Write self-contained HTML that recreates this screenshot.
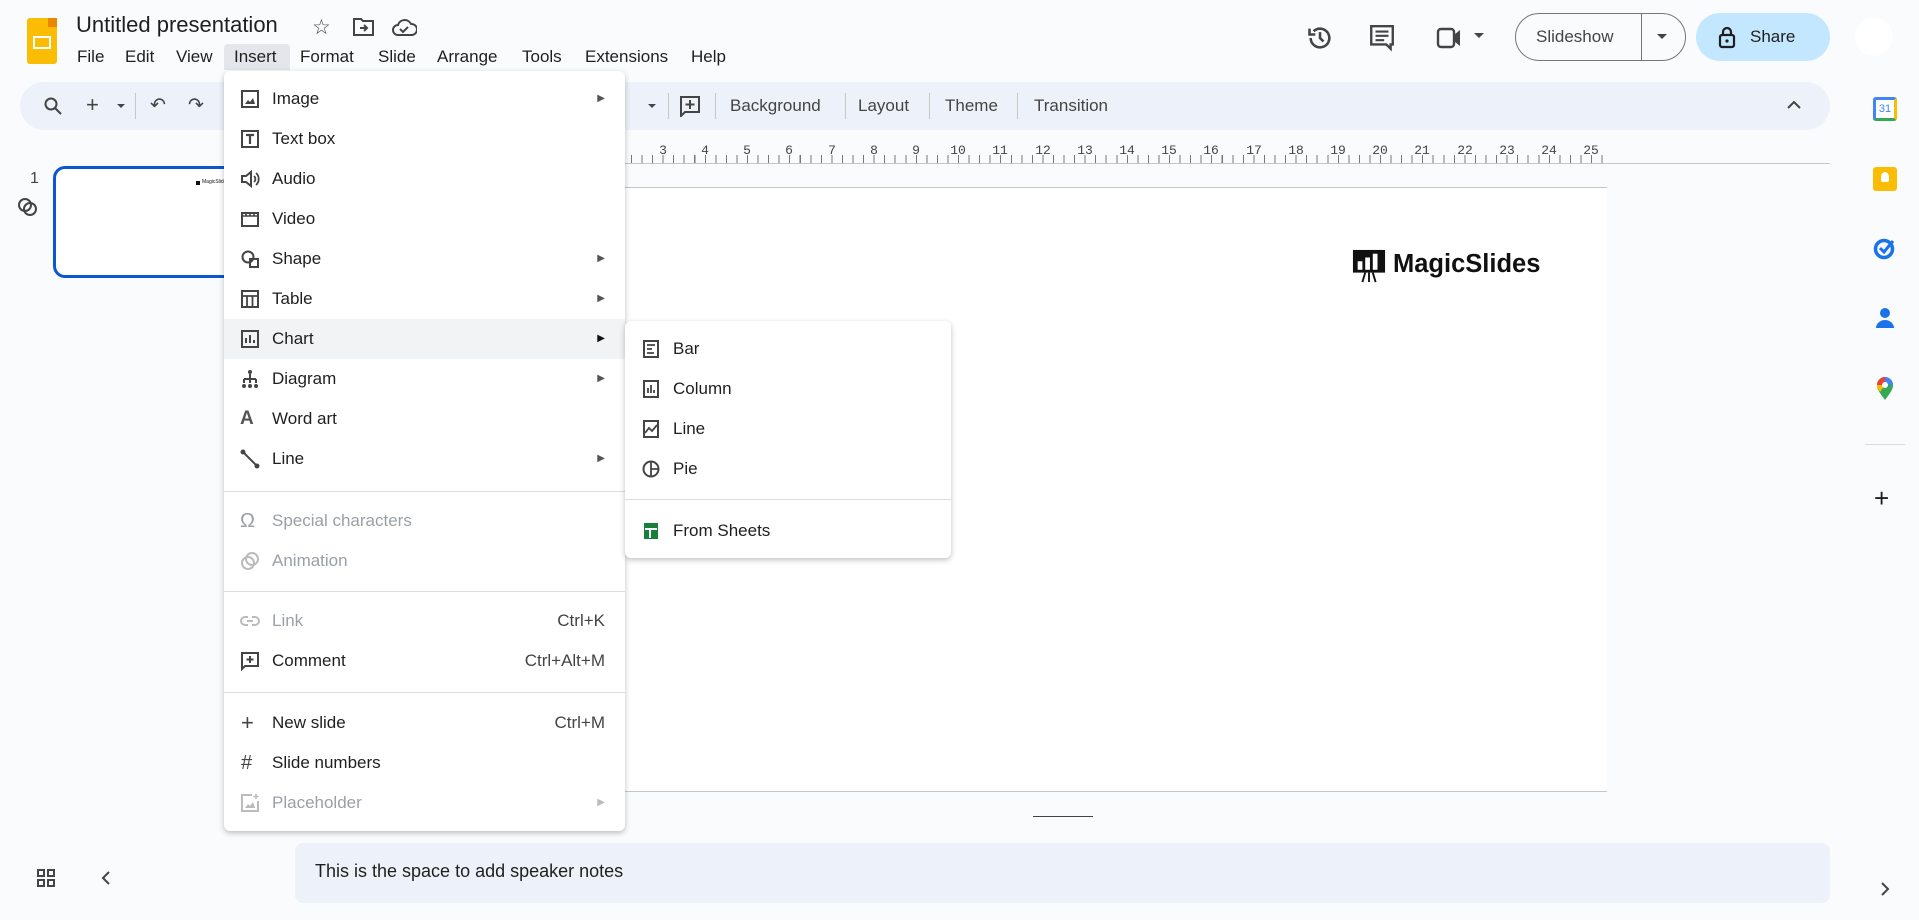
<!DOCTYPE html>
<html><head><meta charset="utf-8"><style>
*{box-sizing:border-box;margin:0;padding:0}
body{width:1919px;height:920px;background:#f9fbfd;font-family:"Liberation Sans",Arial,sans-serif;color:#1f1f1f;position:relative;overflow:hidden}
.a{position:absolute}
.menu span{position:absolute}
.mi{position:absolute;left:0;width:401px;height:40px;font-size:17px;line-height:40px}
.mi .t{left:48px}
.mi .ic{left:16px;top:10px;width:20px;height:20px}
.mi .ar{right:20px;font-size:10px;color:#555}
.mi .sc{right:20px;color:#444}
.dis{color:#9aa0a6}
.sep{position:absolute;left:0;height:1px;background:#dadce0}
.tb{font-size:17px;color:#444;top:96px}
.vs{position:absolute;width:1px;height:26px;background:#c7c7c7;top:93px}
.rn{position:absolute;top:143px;font-size:13px;color:#444;font-family:"Liberation Mono",monospace;transform:translateX(-50%)}
svg{display:block}
</style></head><body>
<div class="a" style="left:27px;top:18px;width:30px;height:46px;background:#fbbc04;border-radius:3px"></div>
<div class="a" style="left:48px;top:18px;width:9px;height:9px;background:#ea8600"></div>
<div class="a" style="left:33px;top:36px;width:18px;height:13px;border:2.5px solid #fff"></div>
<div class="a" style="left:76px;top:12px;font-size:22px;color:#1f1f1f">Untitled presentation</div>
<div class="a" style="left:312px;top:15px;font-size:21px;color:#444">☆</div>
<svg class="a" style="left:352px;top:16px" width="24" height="22" viewBox="0 0 24 22"><path d="M2 3h7l2 2h10v14H2z" fill="none" stroke="#444" stroke-width="2"/><path d="M8 12h7m-3-3l3 3-3 3" fill="none" stroke="#444" stroke-width="2"/></svg>
<svg class="a" style="left:391px;top:16px" width="26" height="22" viewBox="0 0 26 22"><path d="M7 19a5 5 0 010-10 7 7 0 0113-1 5 5 0 011 11z" fill="none" stroke="#444" stroke-width="2"/><path d="M9 13l3 3 5-5" fill="none" stroke="#444" stroke-width="2"/></svg>
<div class="a" style="left:224px;top:44px;width:66px;height:26px;background:#e3e6ea;border-radius:4px 4px 0 0"></div>
<div class="a" style="top:47px;font-size:17px;left:77px">File</div>
<div class="a" style="top:47px;font-size:17px;left:125px">Edit</div>
<div class="a" style="top:47px;font-size:17px;left:176px">View</div>
<div class="a" style="top:47px;font-size:17px;left:234px">Insert</div>
<div class="a" style="top:47px;font-size:17px;left:300px">Format</div>
<div class="a" style="top:47px;font-size:17px;left:378px">Slide</div>
<div class="a" style="top:47px;font-size:17px;left:437px">Arrange</div>
<div class="a" style="top:47px;font-size:17px;left:522px">Tools</div>
<div class="a" style="top:47px;font-size:17px;left:585px">Extensions</div>
<div class="a" style="top:47px;font-size:17px;left:691px">Help</div>
<svg class="a" style="left:1306px;top:24px" width="28" height="28" viewBox="0 0 24 24"><path d="M4 12a8 8 0 1 0 2.5-5.8" fill="none" stroke="#444" stroke-width="2.2"/><path d="M3 4v5h5" fill="none" stroke="#444" stroke-width="2.2"/><path d="M12 7v5l3 3" fill="none" stroke="#444" stroke-width="2.2"/></svg>
<svg class="a" style="left:1369px;top:24px" width="26" height="28" viewBox="0 0 24 26"><path d="M2 2h20v17h-2v4l-4-4H2z" fill="none" stroke="#444" stroke-width="2.2"/><path d="M6 7h12M6 11h12M6 15h8" stroke="#444" stroke-width="2"/></svg>
<svg class="a" style="left:1436px;top:25px" width="28" height="26" viewBox="0 0 28 26"><rect x="2" y="4" width="16" height="18" rx="3" fill="none" stroke="#444" stroke-width="2.4"/><path d="M18 10l6-5v16l-6-5z" fill="#444"/></svg>
<div class="a" style="left:1474px;top:33px;border:5px solid transparent;border-top:5px solid #444"></div>
<div class="a" style="left:1515px;top:13px;width:171px;height:48px;border:1px solid #747775;border-radius:24px"></div>
<div class="a" style="left:1641px;top:13px;width:1px;height:48px;background:#747775"></div>
<div class="a" style="left:1536px;top:27px;font-size:17px;color:#444">Slideshow</div>
<div class="a" style="left:1657px;top:34px;border:5px solid transparent;border-top:5px solid #444"></div>
<div class="a" style="left:1696px;top:13px;width:134px;height:48px;background:#c2e7ff;border-radius:24px"></div>
<svg class="a" style="left:1718px;top:25px" width="18" height="24" viewBox="0 0 18 24"><rect x="2" y="10" width="14" height="12" rx="2" fill="none" stroke="#1f1f1f" stroke-width="2.2"/><path d="M5 10V7a4 4 0 018 0v3" fill="none" stroke="#1f1f1f" stroke-width="2.2"/><circle cx="9" cy="16" r="1.6" fill="#1f1f1f"/></svg>
<div class="a" style="left:1750px;top:27px;font-size:17px;color:#1f1f1f">Share</div>
<div class="a" style="left:1855px;top:18px;width:38px;height:38px;background:#fff;border-radius:50%"></div>
<div class="a" style="left:20px;top:82px;width:1810px;height:48px;background:#edf2fa;border-radius:24px"></div>
<svg class="a" style="left:43px;top:96px" width="20" height="20" viewBox="0 0 20 20"><circle cx="8" cy="8" r="5.5" fill="none" stroke="#444" stroke-width="2"/><path d="M12 12l6 6" stroke="#444" stroke-width="2"/></svg>
<div class="a" style="left:86px;top:92px;font-size:22px;color:#444">+</div>
<div class="a" style="left:117px;top:104px;border:4px solid transparent;border-top:4px solid #444"></div>
<div class="vs" style="left:135px"></div>
<div class="a" style="left:150px;top:94px;font-size:19px;color:#444">↶</div>
<div class="a" style="left:188px;top:94px;font-size:19px;color:#444">↷</div>
<div class="a" style="left:648px;top:104px;border:4px solid transparent;border-top:4px solid #444"></div>
<div class="vs" style="left:668px"></div>
<svg class="a" style="left:679px;top:95px" width="22" height="22" viewBox="0 0 22 22"><path d="M2 2h18v15H6l-4 4z" fill="none" stroke="#444" stroke-width="2"/><path d="M11 5v9M6.5 9.5h9" stroke="#444" stroke-width="2"/></svg>
<div class="vs" style="left:715px"></div>
<div class="a tb" style="left:730px">Background</div>
<div class="vs" style="left:845px"></div>
<div class="a tb" style="left:858px">Layout</div>
<div class="vs" style="left:929px"></div>
<div class="a tb" style="left:945px">Theme</div>
<div class="vs" style="left:1017px"></div>
<div class="a tb" style="left:1034px">Transition</div>
<svg class="a" style="left:1786px;top:100px" width="16" height="10" viewBox="0 0 16 10"><path d="M2 8l6-6 6 6" fill="none" stroke="#444" stroke-width="2"/></svg>
<div class="a" style="left:536px;top:155px;width:1071px;height:8px;background:repeating-linear-gradient(90deg,#777 0 1px,transparent 1px 10.55px)"></div>
<div class="a" style="left:536px;top:163px;width:1294px;height:1px;background:#c4c7c5"></div>
<div class="rn" style="left:663px">3</div><div class="rn" style="left:705px">4</div><div class="rn" style="left:747px">5</div><div class="rn" style="left:789px">6</div><div class="rn" style="left:832px">7</div><div class="rn" style="left:874px">8</div><div class="rn" style="left:916px">9</div><div class="rn" style="left:958px">10</div><div class="rn" style="left:1000px">11</div><div class="rn" style="left:1043px">12</div><div class="rn" style="left:1085px">13</div><div class="rn" style="left:1127px">14</div><div class="rn" style="left:1169px">15</div><div class="rn" style="left:1211px">16</div><div class="rn" style="left:1254px">17</div><div class="rn" style="left:1296px">18</div><div class="rn" style="left:1338px">19</div><div class="rn" style="left:1380px">20</div><div class="rn" style="left:1422px">21</div><div class="rn" style="left:1465px">22</div><div class="rn" style="left:1507px">23</div><div class="rn" style="left:1549px">24</div><div class="rn" style="left:1591px">25</div>
<div class="a" style="left:532px;top:187px;width:1075px;height:605px;background:#fff;border-top:1px solid #c4c7c5;border-bottom:1px solid #c4c7c5"></div>
<svg class="a" style="left:1352px;top:248px" width="34" height="36" viewBox="0 0 36 36"><rect x="1" y="1" width="34" height="24" fill="#111"/><rect x="6" y="13" width="5" height="9" fill="#fff"/><rect x="14" y="9" width="5" height="13" fill="#fff"/><rect x="22" y="5" width="5" height="17" fill="#fff"/><path d="M14 25l-3 10M18 25v10M22 25l3 10" stroke="#111" stroke-width="2"/></svg>
<div class="a" style="left:1393px;top:250px;font-size:25.5px;font-weight:bold;color:#111">MagicSlides</div>
<div class="a" style="left:1033px;top:816px;width:60px;height:1px;background:#444"></div>
<div class="a" style="left:30px;top:170px;font-size:16px;color:#444">1</div>
<div class="a" style="left:18px;top:198px;width:14px;height:14px;border:2px solid #444;border-radius:50%"></div>
<div class="a" style="left:23px;top:202px;width:14px;height:14px;border:2px solid #444;border-radius:50%"></div>
<div class="a" style="left:53px;top:166px;width:200px;height:112px;border:3px solid #0b57d0;border-radius:12px;background:#fff"></div>
<div class="a" style="left:196px;top:181px;width:4px;height:4px;background:#111"></div>
<div class="a" style="left:202px;top:179px;font-size:5px;color:#111">MagicSlides</div>
<div class="a" style="left:295px;top:843px;width:1535px;height:60px;background:#edf2fa;border-radius:8px"></div>
<div class="a" style="left:315px;top:861px;font-size:18px;color:#1f1f1f">This is the space to add speaker notes</div>
<svg class="a" style="left:36px;top:868px" width="20" height="20" viewBox="0 0 20 20"><g fill="none" stroke="#444" stroke-width="2"><rect x="2" y="2" width="6" height="6"/><rect x="12" y="2" width="6" height="6"/><rect x="2" y="12" width="6" height="6"/><rect x="12" y="12" width="6" height="6"/></g></svg>
<svg class="a" style="left:100px;top:870px" width="12" height="16" viewBox="0 0 12 16"><path d="M9 2L3 8l6 6" fill="none" stroke="#444" stroke-width="2"/></svg>
<div class="a" style="left:1873px;top:97px;width:24px;height:24px;background:#fff;border:3px solid #4285f4;border-bottom-color:#34a853;border-right-color:#fbbc04;border-radius:3px;font-size:11px;color:#4285f4;text-align:center;line-height:18px">31</div>
<div class="a" style="left:1873px;top:167px;width:24px;height:24px;background:#fbbc04;border-radius:3px"></div>
<div class="a" style="left:1881px;top:172px;width:8px;height:10px;background:#fff;border-radius:50% 50% 2px 2px"></div>
<svg class="a" style="left:1873px;top:236px" width="24" height="24" viewBox="0 0 24 24"><circle cx="11" cy="13" r="8.5" fill="none" stroke="#1a73e8" stroke-width="3.5"/><path d="M7 12l4 4 9-11" fill="none" stroke="#1a73e8" stroke-width="3"/></svg>
<svg class="a" style="left:1876px;top:307px" width="18" height="22" viewBox="0 0 18 22"><circle cx="9" cy="6" r="5" fill="#1a73e8"/><path d="M0 21a9 8 0 0118 0z" fill="#1a73e8"/></svg>
<svg class="a" style="left:1876px;top:377px" width="18" height="24" viewBox="0 0 18 24"><path d="M9 23C3 15 1 12 1 8a8 8 0 0116 0c0 4-2 7-8 15z" fill="#34a853"/><path d="M9 0a8 8 0 00-8 8h8z" fill="#ea4335"/><path d="M9 0a8 8 0 018 8H9z" fill="#4285f4"/><path d="M1 8c0 2 1 4 3 7l5-7z" fill="#fbbc04"/><circle cx="9" cy="8" r="3" fill="#fff"/></svg>
<div class="a" style="left:1865px;top:444px;width:40px;height:1px;background:#dadce0"></div>
<div class="a" style="left:1874px;top:483px;font-size:26px;color:#1f1f1f">+</div>
<svg class="a" style="left:1879px;top:881px" width="12" height="16" viewBox="0 0 12 16"><path d="M3 2l6 6-6 6" fill="none" stroke="#444" stroke-width="2"/></svg>
<div class="a menu" style="left:224px;top:71px;width:401px;height:760px;background:#fff;border-radius:6px;box-shadow:0 2px 6px rgba(0,0,0,.25)">
<div class="mi" style="top:8px"><svg class="ic a" viewBox="0 0 20 20"><rect x="2" y="2" width="16" height="16" fill="none" stroke="#444" stroke-width="2"/><path d="M5 15l3-4 2 2 3-4 2 6z" fill="#444"/></svg><span class="t">Image</span><span class="ar">▶</span></div>
<div class="mi" style="top:48px"><svg class="ic a" viewBox="0 0 20 20"><rect x="2" y="2" width="16" height="16" fill="none" stroke="#444" stroke-width="2"/><path d="M6 6h8M10 6v9" stroke="#444" stroke-width="2.2"/></svg><span class="t">Text box</span></div>
<div class="mi" style="top:88px"><svg class="ic a" viewBox="0 0 20 20"><path d="M2 7h4l5-4v14l-5-4H2z" fill="none" stroke="#444" stroke-width="2"/><path d="M14 7a4 4 0 010 6M16 4a8 8 0 010 12" fill="none" stroke="#444" stroke-width="1.8"/></svg><span class="t">Audio</span></div>
<div class="mi" style="top:128px"><svg class="ic a" viewBox="0 0 20 20"><rect x="2" y="4" width="16" height="13" fill="none" stroke="#444" stroke-width="2"/><path d="M2 7h16M6 4v3M10 4v3M14 4v3" stroke="#444" stroke-width="1.6"/></svg><span class="t">Video</span></div>
<div class="mi" style="top:168px"><svg class="ic a" viewBox="0 0 20 20"><circle cx="8" cy="8" r="5.5" fill="none" stroke="#444" stroke-width="2"/><path d="M10 10h8v8h-8z" fill="none" stroke="#444" stroke-width="2"/></svg><span class="t">Shape</span><span class="ar">▶</span></div>
<div class="mi" style="top:208px"><svg class="ic a" viewBox="0 0 20 20"><rect x="2" y="2" width="16" height="16" fill="none" stroke="#444" stroke-width="2"/><path d="M2 7h16M7 7v11M12.5 7v11" stroke="#444" stroke-width="1.8"/></svg><span class="t">Table</span><span class="ar">▶</span></div>
<div class="mi" style="top:248px;background:#f1f3f4"><svg class="ic a" viewBox="0 0 20 20"><rect x="2" y="2" width="16" height="16" fill="none" stroke="#444" stroke-width="2"/><path d="M6 14V9M10 14V6M14 14v-3" stroke="#444" stroke-width="2"/></svg><span class="t">Chart</span><span class="ar" style="color:#111">▶</span></div>
<div class="mi" style="top:288px"><svg class="ic a" viewBox="0 0 20 20"><circle cx="10" cy="3" r="2" fill="#444"/><path d="M10 5v5M4 10h12M4 10v4M10 10v4M16 10v4" stroke="#444" stroke-width="2"/><circle cx="4" cy="17" r="2" fill="#444"/><circle cx="10" cy="17" r="2" fill="#444"/><circle cx="16" cy="17" r="2" fill="#444"/></svg><span class="t">Diagram</span><span class="ar">▶</span></div>
<div class="mi" style="top:328px"><span class="a" style="left:16px;font-weight:bold;font-size:19px;color:#555">A</span><span class="t">Word art</span></div>
<div class="mi" style="top:368px"><svg class="ic a" viewBox="0 0 20 20"><path d="M3 3l14 14" stroke="#444" stroke-width="2"/><circle cx="3" cy="3" r="2.5" fill="#444"/><circle cx="17" cy="17" r="2.5" fill="#444"/></svg><span class="t">Line</span><span class="ar">▶</span></div>
<div class="sep" style="top:420px;width:401px"></div>
<div class="mi dis" style="top:430px"><span class="a" style="left:16px;font-size:20px">Ω</span><span class="t">Special characters</span></div>
<div class="mi dis" style="top:470px"><svg class="ic a" viewBox="0 0 20 20"><circle cx="8" cy="12" r="6" fill="none" stroke="#bbb" stroke-width="2"/><circle cx="12" cy="8" r="6" fill="none" stroke="#bbb" stroke-width="2"/></svg><span class="t">Animation</span></div>
<div class="sep" style="top:520px;width:401px"></div>
<div class="mi dis" style="top:530px"><svg class="ic a" viewBox="0 0 20 20"><path d="M8 6H5a4 4 0 000 8h3M12 6h3a4 4 0 010 8h-3M7 10h6" fill="none" stroke="#bbb" stroke-width="2"/></svg><span class="t">Link</span><span class="sc dis">Ctrl+K</span></div>
<div class="mi" style="top:570px"><svg class="ic a" viewBox="0 0 20 20"><path d="M2 2h16v13H5l-3 3z" fill="none" stroke="#444" stroke-width="2"/><path d="M10 5v7M6.5 8.5h7" stroke="#444" stroke-width="2"/></svg><span class="t">Comment</span><span class="sc">Ctrl+Alt+M</span></div>
<div class="sep" style="top:621px;width:401px"></div>
<div class="mi" style="top:632px"><span class="a" style="left:17px;font-size:22px;color:#444">+</span><span class="t">New slide</span><span class="sc">Ctrl+M</span></div>
<div class="mi" style="top:672px"><span class="a" style="left:17px;font-size:20px;color:#444">#</span><span class="t">Slide numbers</span></div>
<div class="mi dis" style="top:712px"><svg class="ic a" viewBox="0 0 20 20"><path d="M12 2H2v16h16V8" fill="none" stroke="#bbb" stroke-width="2"/><path d="M5 15l3-4 2 2 3-4 2 6z" fill="#bbb"/><path d="M16 1v5M13.5 3.5h5" stroke="#bbb" stroke-width="1.6"/></svg><span class="t">Placeholder</span><span class="ar" style="color:#bbb">▶</span></div>
</div>
<div class="a menu" style="left:625px;top:321px;width:326px;height:237px;background:#fff;border-radius:6px;box-shadow:0 2px 6px rgba(0,0,0,.25)">
<div class="mi" style="top:8px;width:326px"><svg class="ic a" viewBox="0 0 20 20"><rect x="3" y="2" width="14" height="16" fill="none" stroke="#444" stroke-width="2"/><path d="M6 6h8M6 10h5M6 14h7" stroke="#444" stroke-width="1.8"/></svg><span class="t">Bar</span></div>
<div class="mi" style="top:48px;width:326px"><svg class="ic a" viewBox="0 0 20 20"><rect x="3" y="2" width="14" height="16" fill="none" stroke="#444" stroke-width="2"/><path d="M7 14V9M10 14V6M13 14v-3" stroke="#444" stroke-width="1.8"/></svg><span class="t">Column</span></div>
<div class="mi" style="top:88px;width:326px"><svg class="ic a" viewBox="0 0 20 20"><rect x="3" y="2" width="14" height="16" fill="none" stroke="#444" stroke-width="2"/><path d="M4 14l4-5 3 3 5-6" fill="none" stroke="#444" stroke-width="1.8"/></svg><span class="t">Line</span></div>
<div class="mi" style="top:128px;width:326px"><svg class="ic a" viewBox="0 0 20 20"><circle cx="10" cy="10" r="7.5" fill="none" stroke="#444" stroke-width="2"/><path d="M10 2.5v15M10 10h7.5" stroke="#444" stroke-width="1.8"/></svg><span class="t">Pie</span></div>
<div class="sep" style="top:178px;width:326px"></div>
<div class="mi" style="top:190px;width:326px"><svg class="ic a" viewBox="0 0 20 20"><rect x="3" y="2" width="14" height="16" fill="#188038"/><path d="M4 8h12M9 8v9" stroke="#fff" stroke-width="2"/></svg><span class="t">From Sheets</span></div>
</div>
</body></html>
